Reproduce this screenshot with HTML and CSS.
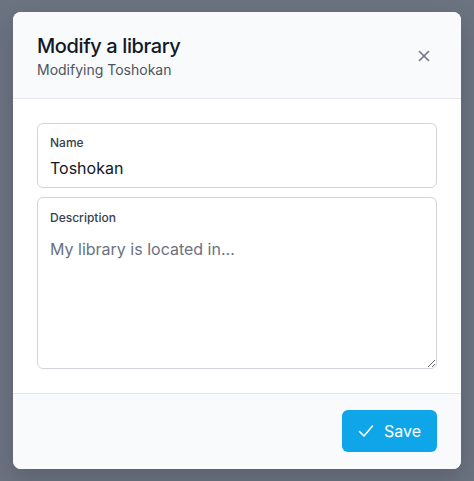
FILE: index.html
```html
<!DOCTYPE html>
<html lang="en">
<head>
<meta charset="utf-8">
<title>Modify a library</title>
<link rel="stylesheet" href="styles.css">
</head>
<body>
<div class="backdrop">
  <div class="modal">
    <div class="modal-header">
      <div class="heading">
        <h2 class="title">Modify a library</h2>
        <p class="subtitle">Modifying Toshokan</p>
      </div>
      <button class="close" aria-label="Close">
        <svg width="12" height="12" viewBox="0 0 12 12"><path d="M1.5 1.5 L10.5 10.5 M10.5 1.5 L1.5 10.5" stroke="#6b7280" stroke-width="1.6" stroke-linecap="round" fill="none"/></svg>
      </button>
    </div>
    <div class="modal-body">
      <label class="field">
        <span class="field-label">Name</span>
        <input class="field-input" type="text" value="Toshokan">
      </label>
      <label class="field field-area">
        <span class="field-label">Description</span>
        <textarea class="field-textarea" placeholder="My library is located in..."></textarea>
      </label>
    </div>
    <div class="modal-footer">
      <button class="save">
        <svg width="18" height="18" viewBox="0 0 18 18"><path d="M2.5 9.5 L7 14 L15.5 4" stroke="#ffffff" stroke-width="1.6" stroke-linecap="round" stroke-linejoin="round" fill="none"/></svg>
        <span>Save</span>
      </button>
    </div>
  </div>
</div>
</body>
</html>
```

FILE: styles.css
```css
* { box-sizing: border-box; }
html, body { margin: 0; padding: 0; }
body {
  font-family: Inter, "Noto Sans", sans-serif;
  background: #6b7280;
  width: 474px;
  height: 481px;
}
.backdrop {
  padding: 12px 13px;
}
.modal {
  width: 448px;
  background: #ffffff;
  border-radius: 8px;
  overflow: hidden;
  box-shadow: 0 10px 25px rgba(0,0,0,0.15);
}
.modal-header {
  background: #f9fafb;
  border-bottom: 1px solid #e5e7eb;
  padding: 20px 24px 18px 24px;
  display: flex;
  align-items: center;
  justify-content: space-between;
}
.title {
  margin: 0;
  font-size: 20px;
  line-height: 28px;
  font-weight: 500;
  color: #111827;
  letter-spacing: -0.4px;
}
.subtitle {
  margin: 0;
  font-size: 14px;
  line-height: 20px;
  color: #4b5563;
}
.close {
  background: none;
  border: none;
  padding: 6px;
  margin-right: 1px;
  display: flex;
  cursor: pointer;
}
.modal-body {
  padding: 24px;
  display: flex;
  flex-direction: column;
  gap: 9px;
}
.field {
  display: flex;
  flex-direction: column;
  border: 1px solid #d1d5db;
  border-radius: 6px;
  padding: 11px 12px 7px 12px;
  height: 65px;
}
.field-label {
  font-size: 12px;
  line-height: 16px;
  font-weight: 500;
  color: #374151;
}
.field-input {
  border: none;
  outline: none;
  padding: 0;
  margin: 5px 0 0 0;
  font-family: inherit;
  font-size: 16px;
  line-height: 24px;
  height: 24px;
  color: #111827;
  background: transparent;
}
.field-area {
  height: 172px;
  padding: 0;
}
.field-area .field-label {
  padding: 12px 12px 0 12px;
}
.field-textarea {
  flex: 1;
  border: none;
  outline: none;
  resize: vertical;
  font-family: inherit;
  font-size: 16px;
  line-height: 24px;
  padding: 11px 12px;
  color: #111827;
  background: transparent;
  border-radius: 0 0 6px 6px;
}
.field-textarea::placeholder {
  color: #6b7280;
}
.modal-footer {
  background: #f9fafb;
  border-top: 1px solid #e5e7eb;
  padding: 16px 24px 17px 24px;
  display: flex;
  justify-content: flex-end;
}
.save {
  display: flex;
  align-items: center;
  gap: 9px;
  height: 42px;
  width: 95px;
  padding: 0 16px 0 15px;
  background: #0ea5e9;
  color: #ffffff;
  border: none;
  border-radius: 6px;
  font-family: inherit;
  font-size: 16px;
  font-weight: 400;
  cursor: pointer;
}
```
